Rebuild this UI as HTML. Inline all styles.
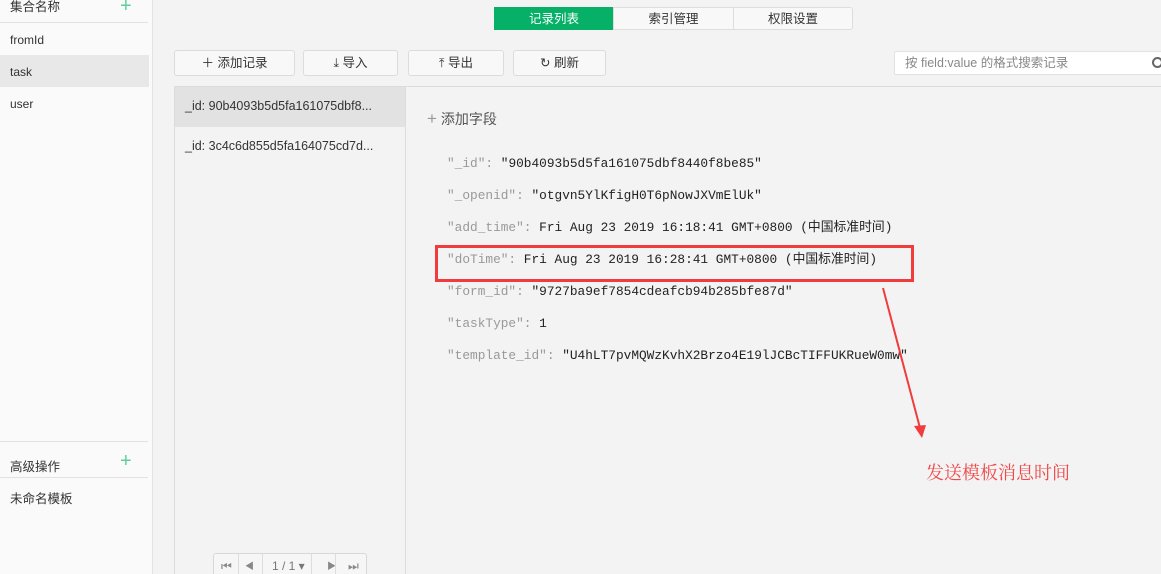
<!DOCTYPE html>
<html><head><meta charset="utf-8"><style>
*{margin:0;padding:0;box-sizing:border-box}
html,body{width:1161px;height:574px;overflow:hidden;background:#f3f3f3}
body{font-family:"Liberation Sans","Noto Sans CJK SC",sans-serif;font-size:12px;color:#333;position:relative}
.a{position:absolute}
.side{left:0;top:0;width:153px;height:574px;background:#fafafa;border-right:1px solid #e2e2e2}
.plus{color:#5fcf9a;font-size:20px;font-weight:300;line-height:1}
.btn{top:50px;height:26px;border:1px solid #dcdcdc;border-radius:3px;background:#f8f8f8;text-align:center;line-height:24px;font-size:12.5px;color:#333}
.mono{font-family:"Liberation Mono","Noto Sans CJK SC",monospace;font-size:12.8px;line-height:16px;height:16px;white-space:nowrap;left:447px}
.k{color:#999}
.v{color:#222}
.tab{top:7px;height:23px;line-height:23px;text-align:center;font-size:12.5px;border:1px solid #ddd;background:#f8f8f8}
</style></head><body>
<div class="a side"></div>
<div class="a" style="left:10px;top:0;line-height:14px;font-size:12.5px">集合名称</div>
<div class="a plus" style="left:120px;top:-4px">+</div>
<div class="a" style="left:0;top:22px;width:148px;border-top:1px solid #e2e2e2"></div>
<div class="a" style="left:10px;top:33px;font-size:12px">fromId</div>
<div class="a" style="left:0;top:55px;width:149px;height:32px;background:#e8e8e8"></div>
<div class="a" style="left:10px;top:65px">task</div>
<div class="a" style="left:10px;top:97px">user</div>
<div class="a" style="left:0;top:441px;width:148px;border-top:1px solid #e2e2e2"></div>
<div class="a" style="left:10px;top:456px;font-size:12.5px">高级操作</div>
<div class="a plus" style="left:120px;top:451px">+</div>
<div class="a" style="left:0;top:477px;width:148px;border-top:1px solid #e2e2e2"></div>
<div class="a" style="left:10px;top:488px;font-size:12.5px">未命名模板</div>

<div class="a tab" style="left:494px;width:120px;background:#07b067;border-color:#07b067;color:#fff">记录列表</div>
<div class="a tab" style="left:613px;width:121px">索引管理</div>
<div class="a tab" style="left:733px;width:120px;border-radius:0 3px 3px 0">权限设置</div>

<div class="a btn" style="left:174px;width:121px">＋ 添加记录</div>
<div class="a btn" style="left:303px;width:95px">⤓ 导入</div>
<div class="a btn" style="left:408px;width:96px">⤒ 导出</div>
<div class="a btn" style="left:513px;width:93px">↻ 刷新</div>
<div class="a" style="left:894px;top:51px;width:280px;height:24px;background:#fff;border:1px solid #e2e2e2;border-radius:2px;color:#888;line-height:22px;padding-left:10px;font-size:12.5px">按 field:value 的格式搜索记录</div>
<div class="a" style="left:1152px;top:57px;width:11px;height:11px;border:2px solid #666;border-radius:50%"></div>

<div class="a" style="left:174px;top:86px;width:987px;border-top:1px solid #dcdcdc"></div>
<div class="a" style="left:174px;top:86px;width:232px;height:488px;border-left:1px solid #dcdcdc;border-right:1px solid #dcdcdc"></div>
<div class="a" style="left:175px;top:87px;width:230px;height:40px;background:#e2e2e2"></div>
<div class="a" style="left:185px;top:99px;font-size:12.5px">_id: 90b4093b5d5fa161075dbf8...</div>
<div class="a" style="left:185px;top:139px;font-size:12.5px">_id: 3c4c6d855d5fa164075cd7d...</div>
<div class="a" style="left:213px;top:553px;width:154px;height:25px;border:1px solid #d8d8d8;border-radius:3px;background:#f6f6f6;color:#888;font-size:12px;line-height:24px">
<span class="a" style="left:7px">⏮</span><span class="a" style="left:24px;top:0;height:24px;border-left:1px solid #ddd"></span><span class="a" style="left:31px;font-size:9px">◀</span><span class="a" style="left:48px;height:24px;border-left:1px solid #ddd"></span><span class="a" style="left:58px;color:#777">1 / 1 ▾</span><span class="a" style="left:97px;height:24px;border-left:1px solid #ddd"></span><span class="a" style="left:113px;font-size:9px">▶</span><span class="a" style="left:121px;height:24px;border-left:1px solid #ddd"></span><span class="a" style="left:134px">⏭</span></div>

<div class="a" style="left:427px;top:109px;color:#555;font-size:14px"><span style="color:#999;font-size:17px">+</span> 添加字段</div>
<div class="a mono" style="top:156px"><span class="k">"_id": </span><span class="v">"90b4093b5d5fa161075dbf8440f8be85"</span></div>
<div class="a mono" style="top:188px"><span class="k">"_openid": </span><span class="v">"otgvn5YlKfigH0T6pNowJXVmElUk"</span></div>
<div class="a mono" style="top:220px"><span class="k">"add_time": </span><span class="v">Fri Aug 23 2019 16:18:41 GMT+0800 (中国标准时间)</span></div>
<div class="a mono" style="top:252px"><span class="k">"doTime": </span><span class="v">Fri Aug 23 2019 16:28:41 GMT+0800 (中国标准时间)</span></div>
<div class="a mono" style="top:284px"><span class="k">"form_id": </span><span class="v">"9727ba9ef7854cdeafcb94b285bfe87d"</span></div>
<div class="a mono" style="top:316px"><span class="k">"taskType": </span><span class="v">1</span></div>
<div class="a mono" style="top:348px"><span class="k">"template_id": </span><span class="v">"U4hLT7pvMQWzKvhX2Brzo4E19lJCBcTIFFUKRueW0mw"</span></div>

<div class="a" style="left:435px;top:245px;width:479px;height:37px;border:3px solid #f03c3c"></div>
<svg class="a" style="left:0;top:0" width="1161" height="574"><line x1="883" y1="288" x2="920" y2="428" stroke="#f03c3c" stroke-width="2"/><polygon points="914,426 926,425 922,438" fill="#f03c3c"/></svg>
<div class="a" style="left:926px;top:459px;color:#f04848;font-size:18px;font-family:'Noto Serif CJK SC',serif">发送模板消息时间</div>
</body></html>
